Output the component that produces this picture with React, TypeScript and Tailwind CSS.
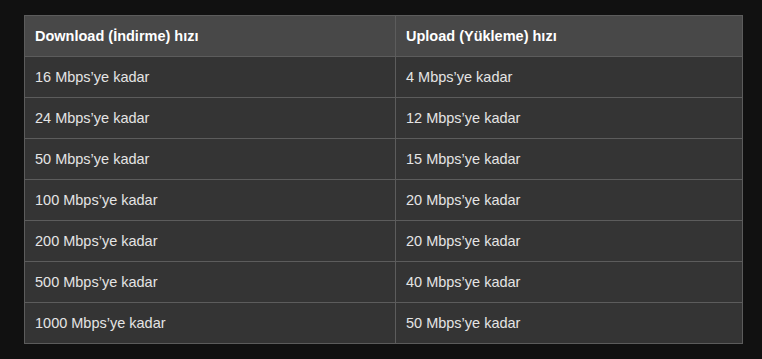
import React from "react";

const rows: [string, string][] = [
  ["16 Mbps’ye kadar", "4 Mbps’ye kadar"],
  ["24 Mbps’ye kadar", "12 Mbps’ye kadar"],
  ["50 Mbps’ye kadar", "15 Mbps’ye kadar"],
  ["100 Mbps’ye kadar", "20 Mbps’ye kadar"],
  ["200 Mbps’ye kadar", "20 Mbps’ye kadar"],
  ["500 Mbps’ye kadar", "40 Mbps’ye kadar"],
  ["1000 Mbps’ye kadar", "50 Mbps’ye kadar"],
];

export default function App() {
  return (
    <div className="w-[762px] h-[359px] bg-[#111111] pt-[15px] pl-[24px] font-['Liberation_Sans',Arial,sans-serif] text-[14.5px]">
      <table className="w-[718px] border-collapse table-fixed">
        <colgroup>
          <col className="w-[371px]" />
          <col className="w-[347px]" />
        </colgroup>
        <thead>
          <tr className="h-[41px] bg-[#484848]">
            <th className="border border-[#5c5c5c] text-left font-bold text-white pl-[10px] pr-[10px] pt-[1px]">Download (İndirme) hızı</th>
            <th className="border border-[#5c5c5c] text-left font-bold text-white pl-[10px] pr-[10px] pt-[1px]">Upload (Yükleme) hızı</th>
          </tr>
        </thead>
        <tbody>
          {rows.map((r, i) => (
            <tr key={i} className="h-[41px] bg-[#343434]">
              <td className="border border-[#5c5c5c] text-[#e4e4e4] pl-[10px] pr-[10px] pt-[1px]">{r[0]}</td>
              <td className="border border-[#5c5c5c] text-[#e4e4e4] pl-[10px] pr-[10px] pt-[1px]">{r[1]}</td>
            </tr>
          ))}
        </tbody>
      </table>
    </div>
  );
}
